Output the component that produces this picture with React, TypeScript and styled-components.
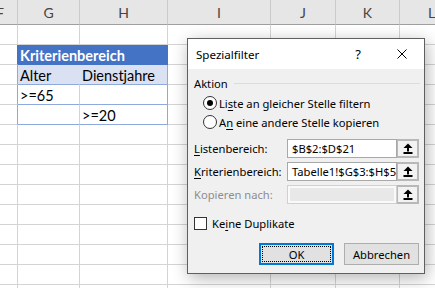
import React from 'react';
import styled, { createGlobalStyle } from 'styled-components';

const GlobalStyle = createGlobalStyle`
  html, body {
    margin: 0;
    padding: 0;
    background: #fff;
  }
  body {
    overflow: hidden;
  }
`;

const Page = styled.div`
  position: relative;
  width: 435px;
  height: 288px;
  overflow: hidden;
  background: #fff;
`;

const Sheet = styled.div`
  display: grid;
  grid-template-columns: 18px 62px 88px 103px 65px 64px 64px;
  grid-template-rows: 25px;
  grid-auto-rows: 20px;
  font-family: Lato, "Liberation Sans", sans-serif;
`;

const ColHead = styled.div<{ $edge?: boolean }>`
  box-sizing: border-box;
  background: #e6e6e6;
  border-right: 1px solid #cacaca;
  border-bottom: 1px solid #9f9f9f;
  display: flex;
  align-items: center;
  justify-content: ${(p) => (p.$edge ? 'flex-end' : 'center')};
  padding-right: ${(p) => (p.$edge ? '13px' : '0')};
  font-size: 14px;
  color: #444;
  overflow: hidden;
`;

const Cell = styled.div<{
  $fill?: string;
  $right?: string;
  $bottom?: string;
  $color?: string;
  $bold?: boolean;
  $span?: number;
}>`
  box-sizing: border-box;
  grid-column: span ${(p) => p.$span ?? 1};
  background: ${(p) => p.$fill ?? '#fff'};
  border-right: 1px solid ${(p) => p.$right ?? '#d4d4d4'};
  border-bottom: 1px solid ${(p) => p.$bottom ?? '#d4d4d4'};
  padding: 1px 2px 0;
  display: flex;
  align-items: center;
  font-size: 14.5px;
  color: ${(p) => p.$color ?? '#000'};
  font-weight: ${(p) => (p.$bold ? 700 : 400)};
  white-space: nowrap;
  overflow: hidden;
`;

type CellSpec = {
  text?: string;
  fill?: string;
  right?: string;
  bottom?: string;
  color?: string;
  bold?: boolean;
  span?: number;
};

const BLUE = '#4472c4';
const LIGHT = '#d9e1f2';
const EDGE = '#8ea9db';

const columns = ['F', 'G', 'H', 'I', 'J', 'K', 'L'];

const plain = (n: number): CellSpec[] => Array.from({ length: n }, () => ({}));

const rows: CellSpec[][] = [
  plain(7),
  [
    { right: BLUE },
    { text: 'Kriterienbereich', span: 2, fill: BLUE, right: BLUE, bottom: BLUE, color: '#fff', bold: true },
    ...plain(4),
  ],
  [
    { right: EDGE },
    { text: 'Alter', fill: LIGHT, right: LIGHT, bottom: EDGE },
    { text: 'Dienstjahre', fill: LIGHT, right: EDGE, bottom: EDGE },
    ...plain(4),
  ],
  [{ right: EDGE }, { text: '>=65', bottom: EDGE }, { right: EDGE, bottom: EDGE }, ...plain(4)],
  [{ right: EDGE }, { bottom: EDGE }, { text: '>=20', right: EDGE, bottom: EDGE }, ...plain(4)],
  ...Array.from({ length: 9 }, () => plain(7)),
];

const Dialog = styled.div`
  position: absolute;
  left: 187px;
  top: 38px;
  width: 238px;
  height: 236px;
  box-sizing: border-box;
  border: 1px solid #5f5f5f;
  background: #f0f0f0;
  box-shadow: 2px 4px 16px rgba(0, 0, 0, 0.3);
  display: flex;
  flex-direction: column;
  font-family: "Noto Sans", "Open Sans", sans-serif;
  font-size: 11.2px;
  color: #000;
`;

const TitleBar = styled.div`
  height: 30px;
  flex: none;
  background: #fff;
  display: flex;
  align-items: center;
  padding-left: 8px;
`;

const Title = styled.span`
  flex: 1;
  font-size: 11.6px;
`;

const TitleButton = styled.div`
  width: 44px;
  height: 30px;
  display: flex;
  align-items: center;
  justify-content: center;
  font-size: 13px;
`;

const Body = styled.div`
  flex: 1;
  display: flex;
  flex-direction: column;
  padding: 6px 4px 7px 6px;
`;

const GroupHead = styled.div`
  height: 16px;
  display: flex;
  align-items: center;
  gap: 6px;
`;

const GroupLine = styled.div`
  flex: 1;
  height: 1px;
  background: #dcdcdc;
`;

const Option = styled.label<{ $gap: number }>`
  height: 18px;
  margin-top: ${(p) => p.$gap}px;
  margin-left: 9px;
  display: flex;
  align-items: center;
  gap: 2px;
`;

const Radio = styled.span`
  width: 14px;
  height: 14px;
  box-sizing: border-box;
  border-radius: 50%;
  border: 1px solid #333;
  background: #fff;
  display: flex;
  align-items: center;
  justify-content: center;
  flex: none;
`;

const Dot = styled.span`
  width: 6px;
  height: 6px;
  border-radius: 50%;
  background: #000;
`;

const Field = styled.div<{ $gap: number; $disabled?: boolean }>`
  height: 19px;
  margin-top: ${(p) => p.$gap}px;
  display: flex;
  align-items: center;
  color: ${(p) => (p.$disabled ? '#8d8d8d' : '#000')};
`;

const FieldLabel = styled.span`
  width: 93px;
  flex: none;
`;

const RefBox = styled.div<{ $disabled?: boolean }>`
  width: 110px;
  height: 19px;
  box-sizing: border-box;
  border: 1px solid ${(p) => (p.$disabled ? '#d0d0d0' : '#a8a8a8')};
  background: ${(p) => (p.$disabled ? '#e8e8e8' : '#fff')};
  box-shadow: ${(p) => (p.$disabled ? 'inset 0 0 0 2px #f9f9f9' : 'none')};
  padding-left: 4px;
  display: flex;
  align-items: center;
  white-space: nowrap;
  overflow: hidden;
  color: #000;
`;

const PickButton = styled.div`
  width: 22px;
  height: 19px;
  box-sizing: border-box;
  border: 2px solid #b8b8b8;
  border-left-width: 1px;
  background: #f2f2f2;
  display: flex;
  align-items: center;
  justify-content: center;
`;

const Check = styled.label`
  height: 16px;
  margin-top: 11px;
  display: flex;
  align-items: center;
  gap: 5px;
`;

const Box = styled.span`
  width: 13px;
  height: 13px;
  box-sizing: border-box;
  border: 1px solid #333;
  background: #fff;
  flex: none;
`;

const Buttons = styled.div`
  margin-top: 12px;
  display: flex;
  justify-content: flex-end;
  gap: 10px;
  padding-right: 1px;
`;

const Button = styled.div<{ $default?: boolean }>`
  width: 75px;
  height: 22px;
  box-sizing: border-box;
  border: ${(p) => (p.$default ? '2px solid #0078d7' : '1px solid #adadad')};
  background: #e1e1e1;
  display: flex;
  align-items: center;
  justify-content: center;
  padding: 1px;
`;

const Focus = styled.span`
  flex: 1;
  align-self: stretch;
  border: 1px dotted #000;
  display: flex;
  align-items: center;
  justify-content: center;
`;

const Key = styled.u`
  text-decoration-thickness: 1px;
  text-underline-offset: 2px;
`;

const UpArrow = () => (
  <svg width="10" height="11" viewBox="0 0 10 11">
    <polygon points="5,0.5 9.5,5 0.5,5" fill="#000" />
    <rect x="4" y="4.5" width="2" height="4" fill="#000" />
    <rect x="0.5" y="9" width="9" height="2" fill="#000" />
  </svg>
);

const CloseIcon = () => (
  <svg width="10" height="10" viewBox="0 0 10 10">
    <path d="M0.5 0.5 L9.5 9.5 M9.5 0.5 L0.5 9.5" stroke="#000" strokeWidth="1" />
  </svg>
);

export default function App() {
  return (
    <Page>
      <GlobalStyle />
      <Sheet>
        {columns.map((c, i) => (
          <ColHead key={c} $edge={i === 0}>
            {c}
          </ColHead>
        ))}
        {rows.map((row, r) =>
          row.map((cell, c) => (
            <Cell
              key={`${r}-${c}`}
              $span={cell.span}
              $fill={cell.fill}
              $right={cell.right}
              $bottom={cell.bottom}
              $color={cell.color}
              $bold={cell.bold}
            >
              {cell.text}
            </Cell>
          ))
        )}
      </Sheet>

      <Dialog>
        <TitleBar>
          <Title>Spezialfilter</Title>
          <TitleButton>?</TitleButton>
          <TitleButton>
            <CloseIcon />
          </TitleButton>
        </TitleBar>
        <Body>
          <GroupHead>
            Aktion
            <GroupLine />
          </GroupHead>
          <Option $gap={3}>
            <Radio>
              <Dot />
            </Radio>
            <span>
              Li<Key>s</Key>te an gleicher Stelle filtern
            </span>
          </Option>
          <Option $gap={1}>
            <Radio />
            <span>
              A<Key>n</Key> eine andere Stelle kopieren
            </span>
          </Option>
          <Field $gap={8}>
            <FieldLabel>
              <Key>L</Key>istenbereich:
            </FieldLabel>
            <RefBox>$B$2:$D$21</RefBox>
            <PickButton>
              <UpArrow />
            </PickButton>
          </Field>
          <Field $gap={4}>
            <FieldLabel>
              <Key>K</Key>riterienbereich:
            </FieldLabel>
            <RefBox>Tabelle1!$G$3:$H$5</RefBox>
            <PickButton>
              <UpArrow />
            </PickButton>
          </Field>
          <Field $gap={4} $disabled>
            <FieldLabel>Kopieren nach:</FieldLabel>
            <RefBox $disabled />
            <PickButton>
              <UpArrow />
            </PickButton>
          </Field>
          <Check>
            <Box />
            <span>
              Ke<Key>i</Key>ne Duplikate
            </span>
          </Check>
          <Buttons>
            <Button $default>
              <Focus>OK</Focus>
            </Button>
            <Button>Abbrechen</Button>
          </Buttons>
        </Body>
      </Dialog>
    </Page>
  );
}
